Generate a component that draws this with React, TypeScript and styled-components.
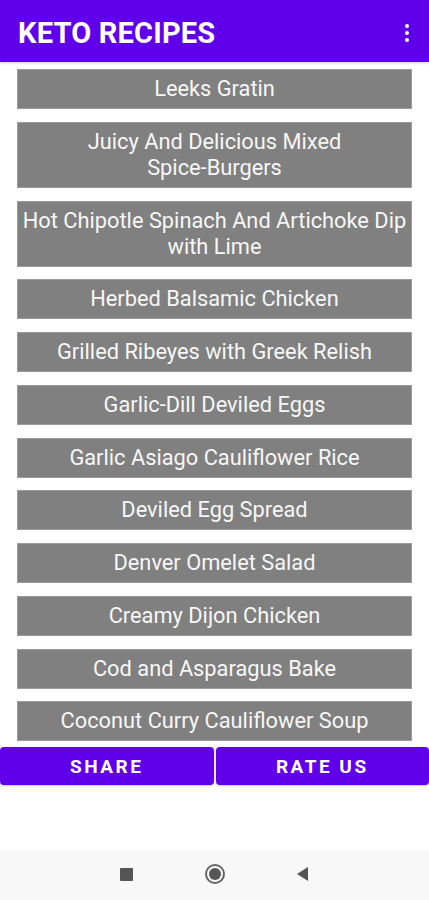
import styled, { createGlobalStyle } from "styled-components";

const PURPLE = "#6000ea";
const ITEM_BG = "#808080";

const GlobalStyle = createGlobalStyle`
  html, body {
    margin: 0;
    padding: 0;
    background: #ffffff;
  }
  * {
    box-sizing: border-box;
  }
`;

const Screen = styled.div`
  width: 429px;
  height: 900px;
  display: flex;
  flex-direction: column;
  font-family: Roboto, "Liberation Sans", sans-serif;
  background: #ffffff;
  overflow: hidden;
`;

const AppBar = styled.header`
  height: 62px;
  flex-shrink: 0;
  background: ${PURPLE};
  display: flex;
  align-items: center;
  justify-content: space-between;
  padding: 3px 18px 0 18px;
  box-shadow: 0 1px 3px rgba(0, 0, 0, 0.2);
`;

const Title = styled.h1`
  margin: 0;
  color: #ffffff;
  font-size: 29px;
  font-weight: 700;
  letter-spacing: 0.2px;
`;

const MenuDots = styled.div`
  display: flex;
  flex-direction: column;
  gap: 3px;
  padding-right: 2px;

  span {
    width: 4px;
    height: 4px;
    border-radius: 50%;
    background: #ffffff;
  }
`;

const RecipeList = styled.ul`
  list-style: none;
  margin: 0;
  padding: 7px 17px 0 17px;
  display: flex;
  flex-direction: column;
  gap: 12.75px;
`;

const RecipeItem = styled.li`
  background: ${ITEM_BG};
  border: 1px solid #9c9c9c;
  color: #f7f7f7;
  font-size: 21.8px;
  line-height: 26px;
  text-align: center;
  padding: 6px 3px;
`;

// keeps hyphenated words such as "Spice-Burgers" on one line
const Word = styled.span`
  white-space: nowrap;
`;

const ActionBar = styled.div`
  display: flex;
  gap: 2px;
  margin-top: 6px;
`;

const ActionButton = styled.button`
  flex: 1;
  height: 38px;
  border: none;
  border-radius: 4px;
  background: ${PURPLE};
  color: #ffffff;
  font-family: Roboto, "Liberation Sans", sans-serif;
  font-size: 19px;
  font-weight: 700;
  letter-spacing: 2.5px;
  box-shadow: 0 1px 2px rgba(0, 0, 0, 0.25);
`;

const Spacer = styled.div`
  flex: 1;
`;

const NavBar = styled.nav`
  height: 50px;
  flex-shrink: 0;
  background: #f8f8f8;
  display: flex;
  align-items: center;
  justify-content: center;
  gap: 72px;
  padding-bottom: 2px;
`;

const NavSquare = styled.div`
  width: 13px;
  height: 13px;
  background: #555555;
  border-radius: 1px;
`;

const NavCircle = styled.div`
  width: 20px;
  height: 20px;
  border-radius: 50%;
  border: 2px solid #666666;
  display: flex;
  align-items: center;
  justify-content: center;

  &::after {
    content: "";
    width: 12px;
    height: 12px;
    border-radius: 50%;
    background: #555555;
  }
`;

const recipes = [
  "Leeks Gratin",
  "Juicy And Delicious Mixed Spice-Burgers",
  "Hot Chipotle Spinach And Artichoke Dip with Lime",
  "Herbed Balsamic Chicken",
  "Grilled Ribeyes with Greek Relish",
  "Garlic-Dill Deviled Eggs",
  "Garlic Asiago Cauliflower Rice",
  "Deviled Egg Spread",
  "Denver Omelet Salad",
  "Creamy Dijon Chicken",
  "Cod and Asparagus Bake",
  "Coconut Curry Cauliflower Soup",
];

function RecipeName({ name }: { name: string }) {
  const words = name.split(" ");
  return (
    <>
      {words.map((w, i) => (
        <span key={i}>
          {w.includes("-") ? <Word>{w}</Word> : w}
          {i < words.length - 1 ? " " : ""}
        </span>
      ))}
    </>
  );
}

export default function App() {
  return (
    <Screen>
      <GlobalStyle />
      <AppBar>
        <Title>KETO RECIPES</Title>
        <MenuDots>
          <span />
          <span />
          <span />
        </MenuDots>
      </AppBar>
      <RecipeList>
        {recipes.map((name) => (
          <RecipeItem key={name}>
            <RecipeName name={name} />
          </RecipeItem>
        ))}
      </RecipeList>
      <ActionBar>
        <ActionButton>SHARE</ActionButton>
        <ActionButton>RATE US</ActionButton>
      </ActionBar>
      <Spacer />
      <NavBar>
        <NavSquare />
        <NavCircle />
        <svg width="12" height="14" viewBox="0 0 12 14">
          <polygon points="11,0 11,14 0,7" fill="#555555" />
        </svg>
      </NavBar>
    </Screen>
  );
}
